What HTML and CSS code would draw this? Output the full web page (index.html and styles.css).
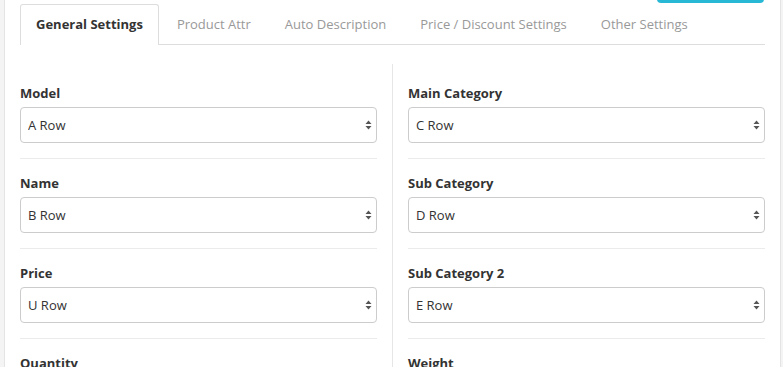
FILE: index.html
```html
<!DOCTYPE html>
<html>
<head>
    <title>Product Import Settings</title>
    <link rel="stylesheet" href="styles.css">
</head>
<body>
    <div id="panel">
        <div class="toolbar">
            <button class="btn-save" aria-label="Save"></button>
        </div>
        <ul class="tabs">
            <li class="tab active">General Settings</li>
            <li class="tab">Product Attr</li>
            <li class="tab">Auto Description</li>
            <li class="tab">Price / Discount Settings</li>
            <li class="tab">Other Settings</li>
        </ul>
        <div class="tab-content">
            <div class="col">
                <div class="form-group">
                    <label>Model</label>
                    <div class="select-wrap">
                        <select><option>A Row</option></select>
                        <svg class="arrows" width="7" height="10" viewBox="0 0 7 10"><path d="M3.5 0.5 L6.5 4 L0.5 4 Z M3.5 9.5 L6.5 6 L0.5 6 Z" fill="#555"/></svg>
                    </div>
                </div>
                <div class="form-group">
                    <label>Name</label>
                    <div class="select-wrap">
                        <select><option>B Row</option></select>
                        <svg class="arrows" width="7" height="10" viewBox="0 0 7 10"><path d="M3.5 0.5 L6.5 4 L0.5 4 Z M3.5 9.5 L6.5 6 L0.5 6 Z" fill="#555"/></svg>
                    </div>
                </div>
                <div class="form-group">
                    <label>Price</label>
                    <div class="select-wrap">
                        <select><option>U Row</option></select>
                        <svg class="arrows" width="7" height="10" viewBox="0 0 7 10"><path d="M3.5 0.5 L6.5 4 L0.5 4 Z M3.5 9.5 L6.5 6 L0.5 6 Z" fill="#555"/></svg>
                    </div>
                </div>
                <div class="form-group">
                    <label>Quantity</label>
                    <div class="select-wrap">
                        <select><option>F Row</option></select>
                        <svg class="arrows" width="7" height="10" viewBox="0 0 7 10"><path d="M3.5 0.5 L6.5 4 L0.5 4 Z M3.5 9.5 L6.5 6 L0.5 6 Z" fill="#555"/></svg>
                    </div>
                </div>
            </div>
            <div class="col col-right">
                <div class="form-group">
                    <label>Main Category</label>
                    <div class="select-wrap">
                        <select><option>C Row</option></select>
                        <svg class="arrows" width="7" height="10" viewBox="0 0 7 10"><path d="M3.5 0.5 L6.5 4 L0.5 4 Z M3.5 9.5 L6.5 6 L0.5 6 Z" fill="#555"/></svg>
                    </div>
                </div>
                <div class="form-group">
                    <label>Sub Category</label>
                    <div class="select-wrap">
                        <select><option>D Row</option></select>
                        <svg class="arrows" width="7" height="10" viewBox="0 0 7 10"><path d="M3.5 0.5 L6.5 4 L0.5 4 Z M3.5 9.5 L6.5 6 L0.5 6 Z" fill="#555"/></svg>
                    </div>
                </div>
                <div class="form-group">
                    <label>Sub Category 2</label>
                    <div class="select-wrap">
                        <select><option>E Row</option></select>
                        <svg class="arrows" width="7" height="10" viewBox="0 0 7 10"><path d="M3.5 0.5 L6.5 4 L0.5 4 Z M3.5 9.5 L6.5 6 L0.5 6 Z" fill="#555"/></svg>
                    </div>
                </div>
                <div class="form-group">
                    <label>Weight</label>
                    <div class="select-wrap">
                        <select><option>G Row</option></select>
                        <svg class="arrows" width="7" height="10" viewBox="0 0 7 10"><path d="M3.5 0.5 L6.5 4 L0.5 4 Z M3.5 9.5 L6.5 6 L0.5 6 Z" fill="#555"/></svg>
                    </div>
                </div>
            </div>
        </div>
    </div>
</body>
</html>
```

FILE: styles.css
```css
body {
    font-family: 'Open Sans', 'Liberation Sans', sans-serif;
    background-color: #f4f4f4;
    margin: 0;
    height: 367px;
    overflow: hidden;
}
#panel {
    margin-left: 4px;
    width: 745px;
    padding: 0 15px;
    background-color: #ffffff;
    border-left: 1px solid #e4e4e4;
    border-right: 1px solid #e4e4e4;
    min-height: 367px;
}
.toolbar {
    display: flex;
    justify-content: flex-end;
    height: 4px;
}
.btn-save {
    width: 107px;
    height: 30px;
    margin-top: -27px;
    margin-right: 1px;
    background-color: #27b8d6;
    border: none;
    border-radius: 4px;
}
.tabs {
    list-style: none;
    margin: 0;
    padding: 0;
    display: flex;
    border-bottom: 1px solid #dddddd;
}
.tab {
    padding: 0 15px;
    margin-right: 2px;
    height: 39px;
    line-height: 39px;
    font-size: 13px;
    color: #999999;
    border: 1px solid transparent;
    border-bottom: none;
    margin-bottom: -1px;
}
.tab.active {
    color: #333333;
    font-weight: bold;
    background-color: #ffffff;
    border-color: #dddddd;
    border-radius: 3px 3px 0 0;
    height: 40px;
}
.tab-content {
    display: flex;
    margin-top: 19px;
}
.col {
    width: 357px;
    padding: 20px 15px 0 0;
}
.col-right {
    border-left: 1px solid #e6e6e6;
    padding: 20px 0 0 15px;
}
.form-group {
    padding-bottom: 15px;
    margin-bottom: 15px;
    border-bottom: 1px solid #ebebeb;
}
.form-group label {
    display: block;
    font-size: 13px;
    font-weight: bold;
    line-height: 18px;
    color: #333333;
    margin-bottom: 5px;
}
.select-wrap {
    position: relative;
}
.select-wrap select {
    appearance: none;
    -webkit-appearance: none;
    width: 100%;
    height: 36px;
    padding: 0 7px;
    border: 1px solid #cccccc;
    border-radius: 4px;
    background-color: #ffffff;
    font-family: inherit;
    font-size: 13px;
    color: #333333;
}
.arrows {
    position: absolute;
    right: 5px;
    top: 13px;
}
```
